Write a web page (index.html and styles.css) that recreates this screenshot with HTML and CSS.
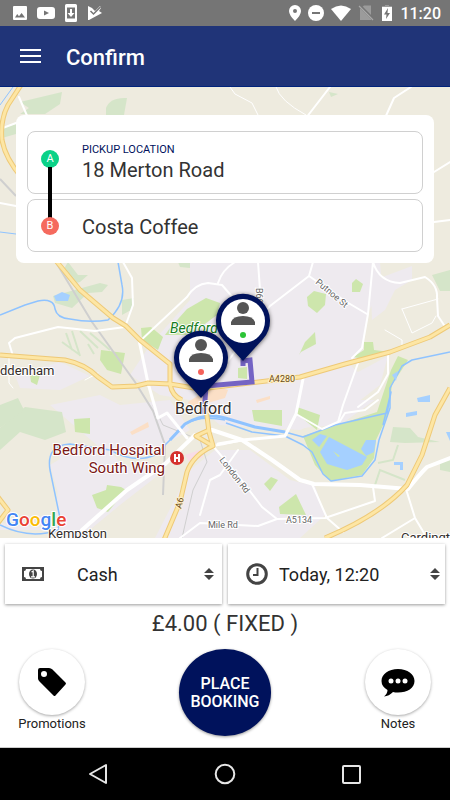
FILE: index.html
```html
<!DOCTYPE html>
<html lang="en">
    <head>
        <meta charset="utf-8">
        <title>Confirm</title>
        <meta name="viewport" content="width=device-width, initial-scale=1">
        <link rel="stylesheet" href="styles.css">
    </head>
    <body>
        <div class="status">
            <svg class="status_icon" width="16" height="16" viewBox="0 0 16 16">
                <path fill="#fff" fill-rule="evenodd" d="M2 1H14Q15 1 15 2V14Q15 15 14 15H2Q1 15 1 14V2Q1 1 2 1ZM3 12.500H13L9.600 8L7 11.200L5.200 9Z"/>
            </svg>
            <svg class="status_icon" width="18" height="16" viewBox="0 0 18 16">
                <path fill="#fff" fill-rule="evenodd" d="M3 2H15Q18 2 18 5V11Q18 14 15 14H3Q0 14 0 11V5Q0 2 3 2ZM7 5.500V10.500L12 8Z"/>
            </svg>
            <svg class="status_icon" width="14" height="18" viewBox="0 0 14 18">
                <path fill="#fff" fill-rule="evenodd" d="M2.500 0H11.500Q13 0 13 1.500V16.500Q13 18 11.500 18H2.500Q1 18 1 16.500V1.500Q1 0 2.500 0ZM3 3.500V14.500H11V3.500Z"/>
                <path fill="#fff" d="M6 5H8V9H10.500L7 13L3.500 9H6Z"/>
            </svg>
            <svg class="status_icon" width="16" height="16" viewBox="0 0 16 16">
                <path fill="#fff" d="M1 1L5 3L8 6L13 1L14 3L12 6L15 8L2 15H1Z"/>
                <path fill="none" stroke="#757575" stroke-width="1.500" d="M3.500 6L6.500 9L13.500 2"/>
            </svg>
            <div class="status_right">
                <svg width="12" height="18" viewBox="0 0 12 18">
                    <path fill="#fff" fill-rule="evenodd" d="M6 1A6 6 0 0 1 12 7Q12 11 6 17Q0 11 0 7A6 6 0 0 1 6 1ZM6 5A2 2 0 1 0 6 9A2 2 0 1 0 6 5Z"/>
                </svg>
                <svg width="16" height="16" viewBox="0 0 16 16">
                    <circle cx="8" cy="8" r="8" fill="#fff"/>
                    <path stroke="#757575" stroke-width="2" d="M4 8H12"/>
                </svg>
                <svg width="20" height="16" viewBox="0 0 20 16">
                    <path fill="#fff" d="M0 4Q10-3 20 4L10 16Z"/>
                </svg>
                <svg width="16" height="16" viewBox="0 0 16 16">
                    <path fill="#9b9b9b" d="M6 0.500H13V15H2V4Z"/>
                    <path stroke="#757575" stroke-width="3" d="M1 0L16 15"/>
                    <path stroke="#a8a8a8" stroke-width="1.200" d="M1 1L15 15"/>
                </svg>
                <svg width="12" height="16" viewBox="0 0 12 16">
                    <path fill="#9b9b9b" d="M4 0H8V1H11V4H1V1H4Z"/>
                    <path fill="#fff" d="M1 2H11V16H1Z"/>
                    <path fill="#757575" d="M7 3L3 9.500H5.500L5 14L9 8H6.500Z"/>
                </svg>
                <span class="clock">11:20</span>
            </div>
        </div>

        <header class="header">
            <button class="menu" aria-label="Menu">
                <svg width="22" height="16" viewBox="0 0 22 16">
                    <path stroke="#fff" stroke-width="2" d="M0 2H21M0 8H21M0 14H21"/>
                </svg>
            </button>
            <h1>Confirm</h1>
        </header>

        <main class="map">
            <svg class="map_canvas" viewBox="0 87 450 451" preserveAspectRatio="xMidYMid slice">
                <rect x="-50" y="37" width="550" height="551" fill="#eeebdf"/>

                <!-- built up areas -->
                <g fill="#eeeaef">
                    <path d="M190 262H380L382 285L367 315L362 350L350 365L358 372L388 356L380 385L345 412L300 430L220 425L190 400L160 395L130 375L150 345L190 300Z"/>
                    <path d="M380 278L412 266V280L395 290L385 310L372 320L370 270Z"/>
                    <path d="M50 405L100 395L120 405L170 400L190 430L155 450L110 455L75 450L50 465L60 500V530H0V523L60 530L130 495L150 470L120 465Z"/>
                    <path d="M60 450L110 450L125 470L165 470L120 505L80 538H55Z"/>
                    <path d="M215 450L250 450L290 480L315 486L325 515L300 538H155L190 470Z"/>
                    <path d="M15 375L60 362L90 376L60 390L20 388Z"/>
                    <path d="M290 400H375L340 425L300 428Z"/>
                </g>

                <!-- parks -->
                <g fill="#d5e5c9">
                    <path d="M20 102L62 92L60 104L45 114H20L29 108Z"/>
                    <path d="M106 108Q110 97 127 98L124 115H106Z"/>
                    <path d="M2 128L16 124V134L2 138Z"/>
                    <path d="M53 296L100 283L108 285L102 292L88 293L72 308L55 303Z"/>
                    <path d="M62 272L68 262L78 275H88L80 282L72 284Z"/>
                    <path d="M122 300L134 298L131 310L122 315Z"/>
                    <path d="M0 428L25 407L62 412L66 432L45 440L20 432L0 450Z"/>
                    <path d="M0 405L18 398L24 410L0 428Z"/>
                    <path d="M393 427L410 428L418 437L440 442L405 443L390 442Z"/>
                    <path d="M440 462L450 458V472L440 470Z"/>
                    <path d="M432 275L450 270V291H440Z"/>
                    <path d="M178 262H190V268L180 267Z"/>
                    <path d="M329 92L338 94L331 97Z"/>
                </g>
                <g fill="none" stroke="#d5e5c9" stroke-width="2">
                    <path d="M66 333L72 350M72 331L80 356M80 331L98 348M90 333L110 350M62 342L80 355M88 344L94 354"/>
                    <path d="M375 485L380 470L405 480M398 445L393 460L378 463"/>
                </g>
                <g fill="#cde6ac">
                    <path d="M101 350L125 353L121 374L107 370L100 360Z"/>
                    <path d="M141 328L151 327L163 337L158 350L142 340Z"/>
                    <path d="M187 309L206 298L220 303L217 315L190 335H165L170 328Z"/>
                    <path d="M307 297L314 291L326 294L325 305L317 313L308 306Z"/>
                    <path d="M352 283L356 279L363 284L360 292H352Z"/>
                    <path d="M299 355L305 342L315 332L316 344L301 352Z"/>
                    <path d="M353 357L364 350V342H373L374 350L390 352L370 360Z"/>
                    <path d="M74 419L90 418V434L75 432Z"/>
                    <path d="M92 495L106 490L107 485L121 487L126 490L108 512L97 508Z"/>
                    <path d="M252 410H282V426L254 421Z"/>
                    <path d="M297 407L320 415L317 430L297 414Z"/>
                    <path d="M264 484L271 477L278 480L270 491Z"/>
                    <path d="M279 507L296 494L306 515L280 514Z"/>
                    <path d="M238 368L247 367V379L238 378Z"/>
                    <path d="M30 375H40L37 385L31 382Z"/>
                    <path d="M303 436L377 412L391 370L398 356L408 360L392 385L388 415L376 440L374 458L362 475L330 481L315 465Z"/>
                </g>

                <g fill="#fbdfc6">
                    <path d="M188 402L215 385L228 390L225 398L190 408Z"/>
                    <path d="M256 400L270 396V399L257 403Z"/>
                    <path d="M130 432L148 422L149 427L132 435Z"/>
                </g>
                <path fill="#f8dce6" d="M185 455L200 450L203 457L190 463Z"/>

                <!-- railway -->
                <g fill="none" stroke="#cfcfcf" stroke-width="2">
                    <path d="M0 179L16 196M57 264L92 322L135 382L153 411L165 445L163 495"/>
                    <path d="M153 405L163 425L200 440L207 462L193 490L182 538" stroke-width="1"/>
                </g>

                <!-- river and lakes -->
                <g fill="none" stroke="#8fc3ff" stroke-width="2" stroke-linejoin="round">
                    <path d="M0 315L25 305L38 301Q54 298 55 309Q57 318 70 319Q90 323 108 320Q126 304 122 285L118 262" stroke-width="1.500"/>
                    <path d="M0 525Q30 540 58 530L60 518L50 470Q46 445 70 444L110 450Q135 464 155 455L170 440L185 424Q200 415 225 420" stroke-width="1.500"/>
                    <path d="M170 440L185 424Q205 412 225 418L255 427L285 432" stroke-width="3"/>
                    <path d="M285 432L303 437L335 425L387 413L391 392L383 425" stroke-width="1.500"/>
                    <path d="M226 423L252 432L285 436L303 445L312 452L323 474L331 481L362 476L375 460L379 440L390 408V388L402 366L412 360L450 352" stroke-width="1.500"/>
                    <path d="M0 232L16 234M0 105L13 87" stroke-width="1"/>
                </g>
                <g fill="#a5d0ff">
                    <path d="M54 296L62 292L70 295L68 301L56 301Z"/>
                    <path d="M320 452L329 437L367 457L362 465L347 470L327 464Z"/>
                    <path d="M312 440L320 434L327 436L319 447Z"/>
                    <path d="M361 449L366 440L376 440L374 452L366 456Z"/>
                    <path d="M417 398L430 395V402H418Z"/>
                    <path d="M406 413L417 411V415L406 417Z"/>
                    <path d="M446 432H450V441Z"/>
                    <path d="M394 462H403V470H400V465H394Z"/>
                    <path d="M392 375L398 371L396 381Z"/>
                </g>
                <path fill="#cde6ac" d="M333 451L340 456L338 457Z"/>

                <!-- minor roads -->
                <g fill="none" stroke="#fff" stroke-width="3" stroke-linejoin="round" stroke-linecap="round">
                    <path d="M13 356L9 343L15 338L58 327L95 331L125 327L133 305L132 278L123 262" stroke-width="2"/>
                    <path d="M139 342L187 297Q195 284 208 283L222 285L235 300M218 283Q222 270 235 262" stroke-width="2"/>
                    <path d="M139 340L148 383L158 418L167 413L187 438"/>
                    <path d="M82 530L127 490L165 464L195 435" stroke-width="4"/>
                    <path d="M258 262L260 290M313 262L309 276L270 306L240 345L225 365M309 276L345 301L367 314" stroke-width="2"/>
                    <path d="M373 262L368 314L362 348L352 358M373 262Q379 282 400 283L425 277Q438 285 437 298L438 316L446 328" stroke-width="2"/>
                    <path d="M388 353V374L378 392L358 407M358 363L343 405L338 422" stroke-width="2"/>
                    <path d="M303 379L296 414L285 436L242 440L218 444"/>
                    <path d="M296 414L322 429L340 421L345 413L365 410L378 400" stroke-width="2"/>
                    <path d="M212 430L242 440L272 460L300 480L314 484L360 485L408 489Q419 475 427 467L450 458" stroke-width="4"/>
                    <path d="M213 446L240 478L262 507L277 519L325 518L375 501L373 487M277 519L258 526L200 523L180 538M312 484L327 518L343 532M406 489L415 518L427 538M415 518L382 538" stroke-width="2"/>
                    <path d="M213 446Q235 442 242 440M238 450L220 475L210 480L200 515" stroke-width="2"/>
                    <path d="M19 97L28 118M0 129L16 123M0 203L16 206M330 87L306 118M411 87L394 98L385 118M434 222L450 220M434 172L450 162" stroke-width="2"/>
                    <path d="M230 87L235 94L252 103L258 115M276 87Q280 101 306 115M402 309L438 299M402 309L412 333L432 323L436 316M385 330L402 340V345" stroke-width="1"/>
                    <path d="M9 357V383L13 388M85 380L98 373" stroke-width="1"/>
                </g>

                <!-- main roads -->
                <g fill="none" stroke-linejoin="round">
                    <path class="road_edge" d="M21 85L8 105Q0 120 2 140Q5 158 22 178L57 262L80 290L113 318L126 326L140 340L170 364V384Q172 396 182 400M0 355L65 360Q85 364 98 377L112 387L136 386L148 383L170 384L200 389L300 377L345 364L390 352L430 337L450 325M205 400L209 432L213 446L196 436L209 430M213 446Q193 455 187 472L180 502L164 540M450 388L435 415L422 455L407 485Q380 515 325 538M-2 497L8 510L-2 523"/>
                    <path class="road_fill" d="M21 85L8 105Q0 120 2 140Q5 158 22 178L57 262L80 290L113 318L126 326L140 340L170 364V384Q172 396 182 400M0 355L65 360Q85 364 98 377L112 387L136 386L148 383L170 384L200 389L300 377L345 364L390 352L430 337L450 325M205 400L209 432L213 446L196 436L209 430M213 446Q193 455 187 472L180 502L164 540M450 388L435 415L422 455L407 485Q380 515 325 538M-2 497L8 510L-2 523"/>
                </g>

                <!-- route -->
                <path fill="none" stroke="#7464c4" stroke-width="5" d="M204 414L206 386L252 382L250 360L243 361V366"/>

                <g class="place">
                    <text x="0" y="375" font-size="13">ddenham</text>
                    <text x="175" y="414" font-size="16">Bedford</text>
                    <text x="48" y="538" font-size="13">Kempston</text>
                    <text x="401" y="542" font-size="13">Cardington</text>
                    <text class="park" x="170" y="333" font-size="14">Bedford Park</text>
                    <text class="hospital" x="165" y="455" font-size="15" text-anchor="end">Bedford Hospital</text>
                    <text class="hospital" x="165" y="473" font-size="15" text-anchor="end">South Wing</text>
                </g>
                <g class="road_name">
                    <text transform="translate(315 283) rotate(40)">Putnoe St</text>
                    <text transform="translate(219 460) rotate(52)">London Rd</text>
                    <text x="208" y="528">Mile Rd</text>
                    <text x="286" y="523">A5134</text>
                    <text class="route_no" x="269" y="382">A4280</text>
                    <text class="route_no" transform="translate(181 509) rotate(-74)">A6</text>
                    <text transform="translate(256 288) rotate(90)">B698</text>
                </g>
                <circle cx="177" cy="458" r="7" fill="#d5312d"/>
                <path stroke="#fff" stroke-width="2" fill="none" d="M175 454V462M179 454V462M175 458H179"/>

                <!-- drop off and pickup pins -->
                <defs>
                    <g id="pin">
                        <path class="pin_body" d="M0 40L-20 18A27 27 0 1 1 20 18Z"/>
                        <circle r="22" fill="#fff"/>
                        <circle cy="-13" r="6" fill="#555"/>
                        <path fill="#555" d="M-12 4V1Q-10-5 0-5Q10-5 12 1V4Z"/>
                    </g>
                </defs>
                <use href="#pin" x="243" y="321"/>
                <circle cx="243" cy="335" r="3" fill="#2cc436"/>
                <use href="#pin" x="201" y="358"/>
                <circle cx="201" cy="372" r="3" fill="#f5625a"/>

                <text class="google" x="6" y="526"><tspan fill="#4285f4">G</tspan><tspan fill="#ea4335">o</tspan><tspan fill="#fbbc05">o</tspan><tspan fill="#4285f4">g</tspan><tspan fill="#34a853">l</tspan><tspan fill="#ea4335">e</tspan></text>
            </svg>

            <form class="places">
                <div class="stop">
                    <span class="dot dot_a">A</span>
                    <div class="stop_text">
                        <label for="pickup">PICKUP LOCATION</label>
                        <input type="text" id="pickup" value="18 Merton Road">
                    </div>
                </div>
                <div class="stop stop_b">
                    <span class="dot dot_b">B</span>
                    <div class="stop_text">
                        <input type="text" id="dropoff" value="Costa Coffee" aria-label="Drop off location">
                    </div>
                </div>
            </form>
        </main>

        <section class="booking">
            <div class="options">
                <label class="option option_cash">
                    <svg width="22" height="14" viewBox="0 0 22 14">
                        <path fill="#444" fill-rule="evenodd" d="M0 0H22V14H0ZM4 2Q4 4 2 4V10Q4 10 4 12H18Q18 10 20 10V4Q18 4 18 2Z"/>
                        <ellipse cx="11" cy="7" rx="4" ry="4.500" fill="#444"/>
                        <path fill="none" stroke="#fff" stroke-width="1.200" d="M9.500 5L11.200 4V9.500M9 9.800H13"/>
                    </svg>
                    <select aria-label="Payment">
                        <option>Cash</option>
                        <option>Card</option>
                    </select>
                    <svg class="arrows" width="10" height="12" viewBox="0 0 10 12"><path fill="#444" d="M5 0L10 5H0ZM0 7H10L5 12Z"/></svg>
                </label>
                <label class="option option_time">
                    <svg width="22" height="22" viewBox="0 0 22 22">
                        <circle cx="11" cy="11" r="9.300" fill="none" stroke="#444" stroke-width="3"/>
                        <path fill="none" stroke="#444" stroke-width="2" d="M11.500 5V12H7"/>
                    </svg>
                    <select aria-label="Pickup time">
                        <option>Today, 12:20</option>
                        <option>Today, 12:30</option>
                    </select>
                    <svg class="arrows" width="10" height="12" viewBox="0 0 10 12"><path fill="#444" d="M5 0L10 5H0ZM0 7H10L5 12Z"/></svg>
                </label>
            </div>
            <div class="price">£4.00 ( FIXED )</div>
            <div class="actions">
                <button class="action">
                    <span class="circle">
                        <svg width="30" height="30" viewBox="0 0 30 30">
                            <path fill="#000" fill-rule="evenodd" d="M3 1H12Q14 1 15.500 2.500L28.500 15.500Q29.500 16.500 28.500 17.500L18.500 28.500Q17.500 29.500 16.500 28.500L2.500 14.500Q1 13 1 11.500V3Q1 1 3 1ZM7 4A3 3 0 1 0 7 10A3 3 0 1 0 7 4Z"/>
                        </svg>
                    </span>
                    Promotions
                </button>
                <button class="place_booking">PLACE<br>BOOKING</button>
                <button class="action">
                    <span class="circle">
                        <svg width="34" height="30" viewBox="0 0 34 30">
                            <path fill="#000" d="M17 2C26.500 2 33.500 7 33.500 14C33.500 21 26.500 25.500 17 25.500Q14 25.500 12 25Q8 29 3 29.500Q6.500 26.500 6.500 23Q0.500 19.500 0.500 14C0.500 7 7.500 2 17 2Z"/>
                            <g fill="#fff"><circle cx="10" cy="14" r="2.500"/><circle cx="17" cy="14" r="2.500"/><circle cx="24" cy="14" r="2.500"/></g>
                        </svg>
                    </span>
                    Notes
                </button>
            </div>
        </section>

        <nav class="nav">
            <button aria-label="Back">
                <svg width="22" height="22" viewBox="0 0 22 22"><path fill="none" stroke="#e6e6e6" stroke-width="2" stroke-linejoin="round" d="M19 2V20L3 11Z"/></svg>
            </button>
            <button aria-label="Home">
                <svg width="22" height="22" viewBox="0 0 22 22"><circle cx="11" cy="11" r="9.300" fill="none" stroke="#e6e6e6" stroke-width="2"/></svg>
            </button>
            <button aria-label="Recent apps">
                <svg width="22" height="22" viewBox="0 0 22 22"><rect x="2" y="3" width="17" height="17" rx="1" fill="none" stroke="#e6e6e6" stroke-width="2"/></svg>
            </button>
        </nav>
    </body>
</html>
```
FILE: styles.css
```css
* { box-sizing: border-box; }
body {
    margin: 0;
    min-height: 100vh;
    display: flex;
    flex-direction: column;
    font-family: Roboto, Arial, sans-serif;
    color: #333;
    background: #fff;
}
svg { display: block; flex: none; }
button { font-family: inherit; border: 0; padding: 0; background: none; color: inherit; cursor: pointer; }
input, select { font-family: inherit; border: 0; padding: 0; margin: 0; background: none; color: inherit; outline: none; }

/* status bar */
.status { display: flex; align-items: center; gap: 9px; height: 26px; padding: 0 9px 0 12px; background: #757575; }
.status_right { display: flex; align-items: center; gap: 7px; margin-left: auto; }
.clock { color: #fff; font-size: 16px; font-weight: 500; line-height: 18px; padding-top: 2px; }

.header { display: flex; align-items: center; gap: 24px; height: 61px; padding: 0 20px; background: #203478; border-bottom: 1px solid #00237c; }
.header h1 { margin: 0; font-size: 22px; font-weight: 500; color: #fff; line-height: 28px; padding-top: 4px; }

/* map */
.map { position: relative; flex: 1; min-height: 400px; padding: 28px 16px; overflow: hidden; background: #eeebdf; }
.map_canvas { position: absolute; top: 0; left: 0; width: 100%; height: 100%; }
.road_edge { stroke: #eec977; stroke-width: 5px; }
.road_fill { stroke: #fde6a4; stroke-width: 3px; }
.place text { fill: #332d2a; stroke: #fff; stroke-width: 2px; paint-order: stroke; }
.place .park { fill: #167d22; font-style: italic; }
.place .hospital { fill: #7b1715; }
.road_name text { font-size: 9px; fill: #666; stroke: #fff; stroke-width: 2px; paint-order: stroke; }
.road_name .route_no { fill: #6b4b14; stroke: #fdf0cc; }
.pin_body { fill: #00125c; filter: drop-shadow(0 1px 2px rgba(0, 0, 0, 0.6)); }
.google { font-size: 19px; font-weight: 500; stroke: #fff; stroke-width: 2px; paint-order: stroke; }

.places { position: relative; display: flex; flex-direction: column; gap: 5px; padding: 16px 11px 11px; background: #fff; border-radius: 8px; }
.stop { display: flex; align-items: center; gap: 23px; height: 63px; padding: 0 13px; border: 1px solid #d0d0d0; border-radius: 8px; }
.stop_b { height: 53px; }
.stop_text { flex: 1; min-width: 0; padding-top: 2px; }
.stop label { display: block; font-size: 11px; line-height: 12px; color: #00125c; }
.stop input { display: block; width: 100%; height: 28px; font-size: 20px; color: #333; }
.dot { position: relative; width: 18px; height: 18px; border-radius: 50%; font-size: 11px; line-height: 18px; text-align: center; color: #fff; }
.dot_a { background: #0bd288; margin-bottom: 8px; }
.dot_b { background: #f56a5e; }
/* line joining the two stops */
.dot_a::after { content: ""; position: absolute; left: 7px; top: 17px; width: 4px; height: 51px; background: #000; }

/* booking panel */
.booking { padding: 6px 5px 11px; border-bottom: 1px solid #ccc; }
.options { display: grid; grid-template-columns: 1fr 1fr; gap: 6px; }
.option { display: flex; align-items: center; height: 60px; padding: 0 8px 0 17px; background: #fff; box-shadow: 0 1px 3px rgba(0, 0, 0, 0.4); }
.option_time { padding: 0 5px 0 18px; }
.option select { flex: 1; min-width: 0; appearance: none; font-size: 18px; line-height: 24px; padding-top: 2px; color: #222; }
.option_cash { gap: 33px; }
.option_time { gap: 11px; }
.option .arrows { margin-left: -24px; }
.price { padding-top: 6px; font-size: 22px; line-height: 28px; text-align: center; }
.actions { display: flex; justify-content: space-between; align-items: flex-start; padding: 11px 12px 0; }
.action { display: flex; flex-direction: column; align-items: center; gap: 1px; width: 70px; font-size: 13px; line-height: 16px; color: #222; }
.circle { display: flex; align-items: center; justify-content: center; width: 66px; height: 66px; border-radius: 50%; background: #fff; box-shadow: 0 1px 3px rgba(0, 0, 0, 0.35); }
.place_booking { width: 92px; height: 87px; border-radius: 50%; background: #00125c; color: #fff; font-size: 16px; font-weight: 500; line-height: 18px; box-shadow: 0 1px 3px rgba(0, 0, 0, 0.4); }

/* android navigation */
.nav { display: flex; justify-content: center; gap: 105px; height: 52px; align-items: center; background: #000; }
```
